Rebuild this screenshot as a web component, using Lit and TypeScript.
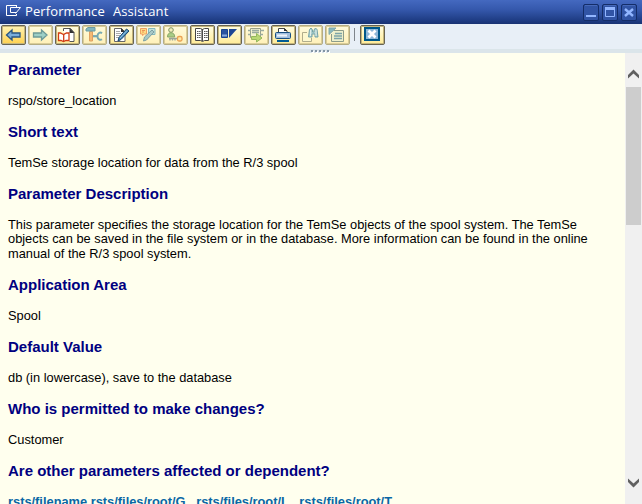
import { LitElement, html, css, svg } from "lit";
import { customElement } from "lit/decorators.js";
import { classMap } from "lit/directives/class-map.js";

const bluePen = svg`<path d="M9 16l1-3.500 7.500-8.500 2.500 2-8 8.500z" fill="#4a8fbd" stroke="#17446e"/><path d="M11 13l7-7.500" stroke="#9bc4df"/>`;

const icons: Record<string, unknown> = {
  back: svg`<path d="M5.500 10l5.500-5v3h8v4h-8v3z" fill="#79addb" stroke="#285582" stroke-width="1.300"/>`,
  forward: svg`<path d="M19 10l-5.500-5v3h-8v4h8v3z" fill="#9dcfc6" stroke="#6d9a98" stroke-width="1.300"/>`,
  book: svg`<path d="M8.500 6V3.500h7l3.500 4v9h-4.500" fill="#fff" stroke="#555"/><path d="M14.500 3v5h5z" fill="#333"/><path d="M3.500 8h2l3 1.500L11.500 8H14v7.500h-3l-2.500 1-2.500-1H3.500z" fill="#fff" stroke="#d13c12" stroke-width="1.300"/><path d="M8.700 9v7" stroke="#d13c12" stroke-width="1.300"/>`,
  tools: svg`<path d="M7.500 6.500V16h3V6.500z" fill="#f4b974" stroke="#e0a060"/><path d="M4 6V4l2-1.500h7V6z" fill="#84b7bd" stroke="#6b9ba4"/><path d="M11 11.200h5" stroke="#78a9b1" stroke-width="2.200"/><path d="M20 8.200c-2-1.500-4.500 0-4.500 3s2.500 4.500 4.500 3" stroke="#78a9b1" stroke-width="1.900"/>`,
  edit: svg`<path d="M5.500 3.500h7l3.500 3.500v9.500H5.500z" fill="#fff" stroke="#666"/><path d="M12 3v4h4z" fill="#333"/><path d="M7 6.500h4M7 8.500h5M7 10.500h4M7 12.500h3" stroke="#aaa"/>${bluePen}`,
  notes: svg`<path d="M4.500 3.500h6v5.500h-2l-2 1.500V9h-2z" fill="#ffdc81" stroke="#efa064"/><path d="M12.500 3.500h6.500v6h-6.500z" fill="#c5e3dc" stroke="#85b9bd"/><path d="M6 5.500h3M6 7h2" stroke="#e99459"/><path d="M7.500 16l1-4 7.500-7 2 2-7.500 8z" fill="#a8c9c7" stroke="#7b9fa3"/>`,
  userkey: svg`<circle cx="8" cy="5" r="2.300" fill="#f3edbb" stroke="#7d9463"/><path d="M4.500 12c0-3 1.500-4.300 3.500-4.300s3.700 1.300 3.700 4.300z" fill="#a9cd85" stroke="#8aa568"/><path d="M6 13.500h9M7 15.500v-2M9.500 15.500v-2M12 15.500v-2" stroke="#9aa59a" stroke-width="1.300"/><rect x="14.500" y="11.500" width="4.500" height="4.500" rx="1.500" fill="#ffe9a4" stroke="#eaa053" stroke-width="1.300"/>`,
  reader: svg`<path d="M5.500 3.500h5l2 1 2-1h4v12h-4l-2 1-2-1h-5z" fill="#fff" stroke="#444"/><path d="M12.200 4v12" stroke="#444" stroke-width="1.500"/><path d="M7 6.500h4M7 8.500h4M7 10.500h4M7 12.500h4M14 6.500h4M14 8.500h4M14 10.500h4M14 12.500h4" stroke="#555" stroke-dasharray="1.500 .6"/>`,
  flag: svg`<path d="M4.500 4.500h6v8h-6z" fill="#2852a0" stroke="#17428e"/><path d="M5 10.500h5" stroke="#86a9dc" stroke-width="2"/><path d="M12 4h8l-8 9z" fill="#1e4694"/>`,
  send: svg`<path d="M6.500 3.500h10v9h-10z" fill="#f5f3cf" stroke="#999f89"/><path d="M4 5.500h3M16 5.500h4M8 5.500h7M8 7.500h7M4 9.500h3M16 9.500h3" stroke="#9aaba0" stroke-width="1.300"/><path d="M7.500 11.500h5V8.500l5.500 4.500-5.500 4v-2.500h-5z" fill="#b9d773" stroke="#94b85b"/>`,
  print: svg`<path d="M7.500 8V3.500h6l2.500 2.500V8" fill="#fff" stroke="#444"/><path d="M13 3v3h3.500z" fill="#333"/><rect x="4.500" y="7.500" width="15" height="6" rx="1" fill="#9fbddd" stroke="#174f82"/><path d="M6 10.500h10" stroke="#eef5fb" stroke-width="2"/><path d="M6 16h12" stroke="#005b94" stroke-width="2"/>`,
  find: svg`<path d="M9 7.500H4.500v9h9V13" fill="#fdf8cf" stroke="#b1ad8b"/><path d="M10.500 12l1-7.500 1.500-1.500 1.500 2v2h1.500V5l1.500-2 1.500 1.500 1 7.500h-3V9h-3v3z" fill="#aed0ce" stroke="#75a3a8"/><path d="M12.500 5v6M18 5v6" stroke="#e1eeea"/>`,
  list: svg`<path d="M9 5.500h9.500v11h-12V9" fill="#eef0cc" stroke="#8c9c8a"/><path d="M4 3h7L4 9.500z" fill="#88b7bd" stroke="#7fa8ad"/><path d="M10 8.500h7M9 11h8M9 13.500h8" stroke="#7ca4a8" stroke-width="1.300"/>`,
  close: svg`<path d="M5 3h14v12H5z" fill="#8db7d8" stroke="#005789" stroke-width="2"/><path d="M8.500 5.500l7 7M15.500 5.500l-7 7" stroke="#fff" stroke-width="2.800"/>`,
};

const buttons: [string, boolean][] = [
  ["back", true], ["forward", false], ["book", true], ["tools", false], ["edit", true],
  ["notes", false], ["userkey", false], ["reader", true], ["flag", true], ["send", false],
  ["print", true], ["find", false], ["list", false],
];

const sections: [string, string[]][] = [
  ["Parameter", ["rspo/store_location"]],
  ["Short text", ["TemSe storage location for data from the R/3 spool"]],
  ["Parameter Description", [
    "This parameter specifies the storage location for the TemSe objects of the spool system. The TemSe",
    "objects can be saved in the file system or in the database. More information can be found in the online",
    "manual of the R/3 spool system.",
  ]],
  ["Application Area", ["Spool"]],
  ["Default Value", ["db (in lowercase), save to the database"]],
  ["Who is permitted to make changes?", ["Customer"]],
];

@customElement("app-root")
export class AppRoot extends LitElement {
  static styles = css`
    :host { display: flex; flex-direction: column; width: 642px; height: 504px; overflow: hidden;
      font-family: "Liberation Sans", Arial, sans-serif; }
    * { box-sizing: border-box; }
    svg { display: block; }
    .title { height: 24px; flex: none; display: flex; align-items: center; padding: 0 5px 0 6px;
      background: linear-gradient(#4469c0, #3558ac 40%, #1c397f 90%, #183273); color: #fff; }
    .name { flex: 1; margin-left: 3px; font: 400 13px/23px "Open Sans", "Noto Sans", sans-serif; white-space: pre; letter-spacing: .1px; word-spacing: .6px; height: 24px; }
    .title > svg { margin-top: -3px; }
    .controls { display: flex; gap: 3px; }
    .bar { height: 25px; flex: none; display: flex; gap: 2px; padding: 1px 0 0 1px; background: #e8eff7; }
    .btn { width: 25px; height: 20px; flex: none; padding: 0; border: 1px solid #b4ac84; border-radius: 2px;
      background: linear-gradient(#fffbdc, #fff0b8); box-shadow: inset 0 0 0 1px #d9cc98; }
    .btn svg { margin: -1px; }
    .on { border-color: #686452; background: linear-gradient(#fffde4, #ffeb96); box-shadow: inset 0 0 0 1px #c4b57c; }
    .hot { background: linear-gradient(#fff3b4, #ffd14f); }
    .sep { width: 1px; height: 13px; margin: 3px 3px 0 2px; background: #7f858c; }
    .grip { height: 4px; flex: none; background: #dbe5ea; display: flex; justify-content: center; gap: 2px; padding-top: 1px; padding-right: 2px; }
    .dot { width: 2px; height: 2px; background: #8395a5; box-shadow: 1px 1px #fff; }
    .main { flex: 1; min-height: 0; display: flex; }
    .doc { flex: 1; background: #ffffee; padding: 8px 0 0 8px; overflow: hidden; }
    h2 { margin: 0 0 14.800px; font-size: 15px; line-height: 18px; font-weight: bold; color: #000080; white-space: nowrap; }
    p { margin: 0 0 14.600px; font-size: 12.84px; line-height: 14.600px; color: #000; white-space: pre; }
    .links { color: #0a67a5; font-weight: bold; }
    .scroll { width: 17px; background: #f0f0f0; display: flex; flex-direction: column; align-items: center; padding: 16px 0 15px; }
    .thumb { width: 15px; height: 138px; flex: none; margin-top: 7px; background: #cdcdcd; }
    .down { margin-top: auto; }
  `;

  button(name: string, on: boolean) {
    return html`<button class=${classMap({ btn: true, on, hot: name === "back" })} aria-label=${name}>
      <svg width="25" height="20" viewBox="0 0 25 20" fill="none">${icons[name]}</svg></button>`;
  }

  control(glyph: unknown) {
    return html`<svg width="16" height="17" viewBox="0 0 16 17" fill="none">
      <rect x=".5" y=".5" width="15" height="16" rx="1.500" fill="#3154a5" stroke="#142d68"/>
      <path d="M2 1.500h12" stroke="#4669b9"/>${glyph}</svg>`;
  }

  render() {
    return html`
      <div class="title">
        <svg width="16" height="14" viewBox="0 0 16 14" fill="none" stroke="#fff"><path d="M11 1.500H.5v10h10V10M10.500 1v2.500h-6v5h6M9 3.500h5.500L9.500 9.500"/></svg>
        <div class="name">Performance  Assistant</div>
        <div class="controls">
          ${this.control(svg`<path d="M3 12h10" stroke="#92b6ff" stroke-width="2"/>`)}
          ${this.control(svg`<path d="M3.500 4v8.500h9V4" stroke="#92b6ff"/><path d="M3 4.500h10" stroke="#92b6ff" stroke-width="3"/>`)}
          ${this.control(svg`<path d="M4 5l8 7M12 5l-8 7" stroke="#92b6ff" stroke-width="2.400"/>`)}
        </div>
      </div>
      <div class="bar">
        ${buttons.map(([n, on]) => this.button(n, on))}
        <div class="sep"></div>
        ${this.button("close", true)}
      </div>
      <div class="grip">${[0, 1, 2, 3, 4].map(() => html`<i class="dot"></i>`)}</div>
      <div class="main">
        <div class="doc">
          ${sections.map(([h, lines]) => html`<h2>${h}</h2><p>${lines.join("\n")}</p>`)}
          <h2>Are other parameters affected or dependent?</h2>
          <p class="links">rsts/filename rsts/files/root/G , rsts/files/root/L , rsts/files/root/T</p>
        </div>
        <div class="scroll">
          <svg width="13" height="11" viewBox="0 0 13 11"><path d="M1 6l5.500-5.500L12 6v3.500L6.500 4.500 1 9.500z" fill="#606060"/></svg>
          <div class="thumb"></div>
          <svg class="down" width="13" height="11" viewBox="0 0 13 11"><path d="M1 4l5.500 5.500L12 4V.5L6.500 5.500 1 .5z" fill="#606060"/></svg>
        </div>
      </div>`;
  }
}
